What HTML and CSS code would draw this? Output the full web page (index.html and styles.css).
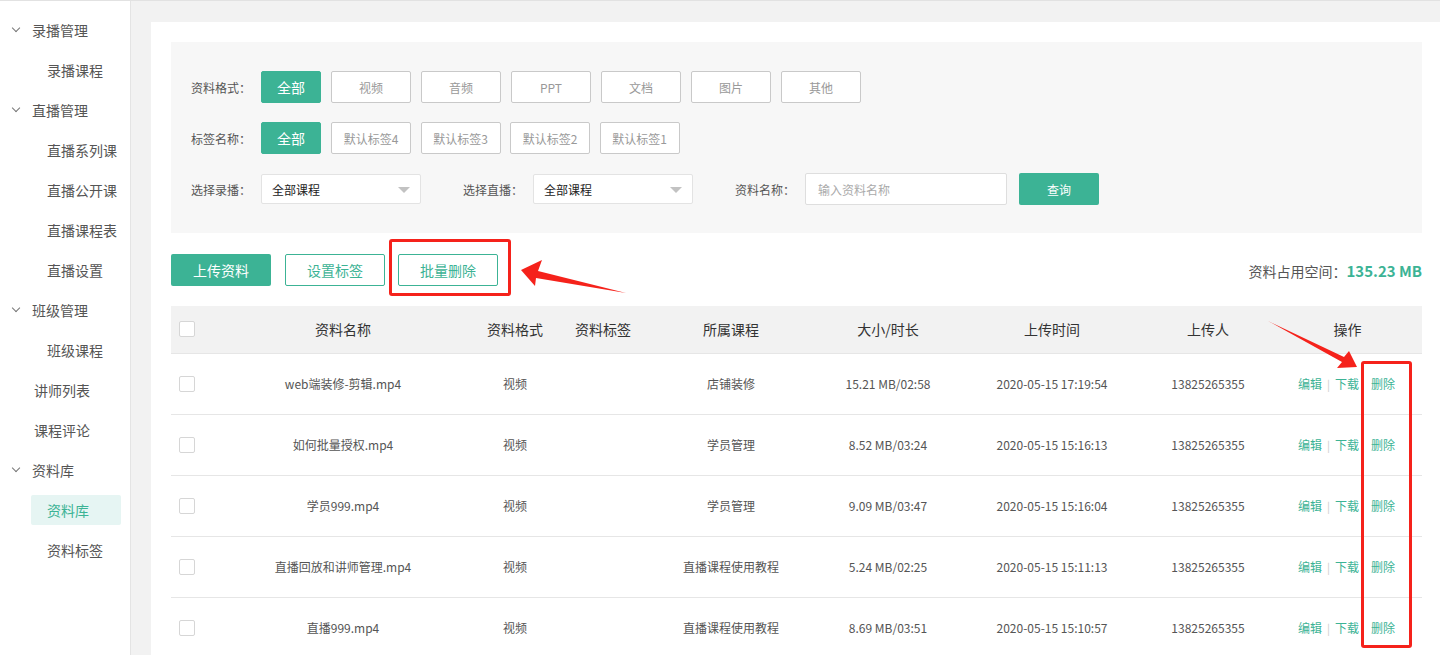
FILE: index.html
```html
<!DOCTYPE html>
<html lang="zh-CN">
<head>
<meta charset="utf-8">
<title>资料库</title>
<link rel="stylesheet" href="styles.css">
</head>
<body>
<div class="app">
  <aside class="sidebar">
    <div class="nav-group"><span class="chev"></span>录播管理</div>
    <div class="nav-sub">录播课程</div>
    <div class="nav-group"><span class="chev"></span>直播管理</div>
    <div class="nav-sub">直播系列课</div>
    <div class="nav-sub">直播公开课</div>
    <div class="nav-sub">直播课程表</div>
    <div class="nav-sub">直播设置</div>
    <div class="nav-group"><span class="chev"></span>班级管理</div>
    <div class="nav-sub">班级课程</div>
    <div class="nav-item">讲师列表</div>
    <div class="nav-item">课程评论</div>
    <div class="nav-group"><span class="chev"></span>资料库</div>
    <div class="nav-sub active"><span>资料库</span></div>
    <div class="nav-sub">资料标签</div>
  </aside>
  <main class="main">
    <div class="card">
      <section class="filters">
        <div class="frow">
          <span class="flabel">资料格式：</span>
          <div class="opts">
            <span class="opt on">全部</span><span class="opt">视频</span><span class="opt">音频</span><span class="opt">PPT</span><span class="opt">文档</span><span class="opt">图片</span><span class="opt">其他</span>
          </div>
        </div>
        <div class="frow">
          <span class="flabel">标签名称：</span>
          <div class="opts tags">
            <span class="opt on">全部</span><span class="opt">默认标签4</span><span class="opt">默认标签3</span><span class="opt">默认标签2</span><span class="opt">默认标签1</span>
          </div>
        </div>
        <div class="frow">
          <span class="flabel">选择录播：</span>
          <div class="select">全部课程<span class="caret"></span></div>
          <span class="flabel gap">选择直播：</span>
          <div class="select">全部课程<span class="caret"></span></div>
          <span class="flabel gap">资料名称：</span>
          <div class="input">输入资料名称</div>
          <span class="btn-query">查询</span>
        </div>
      </section>
      <section class="toolbar">
        <span class="btn solid">上传资料</span>
        <span class="btn outline">设置标签</span>
        <span class="btn outline batch">批量删除</span>
        <span class="usage">资料占用空间：<b>135.23 MB</b></span>
      </section>
      <table class="grid">
        <colgroup>
          <col class="c0"><col class="c1"><col class="c2"><col class="c3"><col class="c4"><col class="c5"><col class="c6"><col class="c7"><col class="c8">
        </colgroup>
        <thead>
          <tr><th><span class="cb"></span></th><th>资料名称</th><th>资料格式</th><th>资料标签</th><th>所属课程</th><th>大小/时长</th><th>上传时间</th><th>上传人</th><th>操作</th></tr>
        </thead>
        <tbody>
          <tr><td><span class="cb"></span></td><td>web端装修-剪辑.mp4</td><td>视频</td><td></td><td>店铺装修</td><td>15.21 MB/02:58</td><td>2020-05-15 17:19:54</td><td>13825265355</td><td class="ops"><a>编辑</a><i>|</i><a>下载</a><a class="del">删除</a></td></tr>
          <tr><td><span class="cb"></span></td><td>如何批量授权.mp4</td><td>视频</td><td></td><td>学员管理</td><td>8.52 MB/03:24</td><td>2020-05-15 15:16:13</td><td>13825265355</td><td class="ops"><a>编辑</a><i>|</i><a>下载</a><a class="del">删除</a></td></tr>
          <tr><td><span class="cb"></span></td><td>学员999.mp4</td><td>视频</td><td></td><td>学员管理</td><td>9.09 MB/03:47</td><td>2020-05-15 15:16:04</td><td>13825265355</td><td class="ops"><a>编辑</a><i>|</i><a>下载</a><a class="del">删除</a></td></tr>
          <tr><td><span class="cb"></span></td><td>直播回放和讲师管理.mp4</td><td>视频</td><td></td><td>直播课程使用教程</td><td>5.24 MB/02:25</td><td>2020-05-15 15:11:13</td><td>13825265355</td><td class="ops"><a>编辑</a><i>|</i><a>下载</a><a class="del">删除</a></td></tr>
          <tr><td><span class="cb"></span></td><td>直播999.mp4</td><td>视频</td><td></td><td>直播课程使用教程</td><td>8.69 MB/03:51</td><td>2020-05-15 15:10:57</td><td>13825265355</td><td class="ops"><a>编辑</a><i>|</i><a>下载</a><a class="del">删除</a></td></tr>
        </tbody>
      </table>
    </div>
  </main>
</div>
<div class="mark box1"></div>
<div class="mark box2"></div>
<svg class="arrows" width="1440" height="700" viewBox="0 0 1440 700">
  <polygon fill="#f5221b" points="521,269 542,259 538,270 626,292 536,277 535,285"/>
  <polygon fill="#f5221b" points="1357,366 1337,367 1342,361 1268,320 1344,356 1349,350"/>
</svg>
</body>
</html>
```

FILE: styles.css
```css
* { box-sizing: border-box; }
html, body { margin: 0; padding: 0; }
body {
  font-family: "Microsoft YaHei", "Noto Sans CJK SC", "Noto Sans", sans-serif;
  color: #333;
  background: #f2f2f2;
  position: relative;
  border-top: 1px solid #e2e2e2;
}
.app { display: flex; min-height: 700px; }
.sidebar {
  width: 131px;
  flex: none;
  background: #fff;
  border-right: 1px solid #e4e4e4;
  padding-top: 9px;
  font-size: 14px;
  color: #555;
}
.nav-group, .nav-sub, .nav-item {
  height: 40px;
  display: flex;
  align-items: center;
}
.nav-group { padding-left: 13px; }
.chev {
  width: 6px; height: 6px;
  border-right: 1px solid #777;
  border-bottom: 1px solid #777;
  transform: rotate(45deg);
  margin: -4px 13px 0 0;
}
.nav-sub { padding-left: 47px; }
.nav-item { padding-left: 34px; }
.nav-sub.active { padding-left: 31px; }
.nav-sub.active span {
  display: block;
  width: 90px;
  height: 30px;
  line-height: 30px;
  padding-left: 16px;
  background: #e6f5f3;
  color: #3cb395;
  border-radius: 2px;
}
.main { flex: 1; padding: 21px 0 0 20px; }
.card { background: #fff; padding: 20px 18px 20px 20px; min-height: 700px; }
.filters {
  background: #f7f7f7;
  padding: 29px 20px 28px 20px;
  display: flex;
  flex-direction: column;
  gap: 19px;
}
.frow { display: flex; align-items: center; height: 32px; }
.flabel { width: 70px; flex: none; font-size: 12px; color: #555; }
.flabel.gap { margin-left: 42px; }
.opts { display: flex; gap: 10px; }
.opts.tags { gap: 9.5px; }
.opt {
  width: 80px; height: 32px;
  border: 1px solid #c9c9c9;
  background: #fff;
  font-size: 12px;
  color: #999;
  display: flex; align-items: center; justify-content: center;
  border-radius: 2px;
}
.opt.on {
  width: 60px;
  background: #3cb395;
  border-color: #3cb395;
  color: #fff;
  font-size: 14px;
}
.tags .opt.on { margin-right: 0.5px; }
.select {
  width: 160px; height: 30px;
  background: #fff;
  border: 1px solid #e3e3e3;
  border-radius: 2px;
  font-size: 12px;
  color: #222;
  padding-left: 10px;
  display: flex; align-items: center;
  position: relative;
}
.caret {
  position: absolute;
  right: 10px; top: 12px;
  width: 0; height: 0;
  border-left: 6px solid transparent;
  border-right: 6px solid transparent;
  border-top: 6px solid #c2c2c2;
}
.input {
  width: 202px; height: 32px;
  background: #fff;
  border: 1px solid #dedede;
  border-radius: 2px;
  font-size: 12px;
  color: #aaa;
  padding-left: 12px;
  display: flex; align-items: center;
}
.btn-query {
  margin-left: 12px;
  width: 80px; height: 32px;
  background: #3cb395;
  color: #fff;
  font-size: 12px;
  border-radius: 2px;
  display: flex; align-items: center; justify-content: center;
}
.toolbar {
  display: flex; align-items: center;
  margin-top: 21px;
  height: 32px;
}
.btn {
  width: 100px; height: 32px;
  font-size: 14px;
  border-radius: 2px;
  display: flex; align-items: center; justify-content: center;
}
.btn.solid { background: #3cb395; color: #fff; }
.btn.outline { border: 1px solid #3cb395; color: #3cb395; background: #fff; margin-left: 14px; }
.btn.batch { margin-left: 13px; }
.usage { margin-left: auto; font-size: 14px; color: #555; }
.usage b { color: #3cb395; font-size: 15px; font-weight: bold; }
.grid {
  margin-top: 20px;
  width: 1251px;
  border-collapse: collapse;
  table-layout: fixed;
}
.c0 { width: 44px; } .c1 { width: 256px; } .c2 { width: 88px; } .c3 { width: 88px; }
.c4 { width: 168px; } .c5 { width: 146px; } .c6 { width: 182px; } .c7 { width: 130px; } .c8 { width: 149px; }
.grid th {
  height: 47px;
  background: #f2f2f2;
  font-size: 14px;
  font-weight: normal;
  color: #333;
  border-bottom: 1px solid #e6e6e6;
  text-align: center;
}
.grid td {
  height: 61px;
  font-size: 12px;
  color: #555;
  text-align: center;
  border-bottom: 1px solid #e6e6e6;
}
.grid th:first-child, .grid td:first-child { text-align: left; padding-left: 8px; }
.cb {
  display: block;
  width: 16px; height: 16px;
  border: 1px solid #d6d6d6;
  border-radius: 2px;
  background: #fff;
}
.ops { text-align: left !important; padding-left: 25px; white-space: nowrap; }
.ops a { color: #3cb395; }
.ops i { font-style: normal; color: #ccc; margin: 0 5px; font-size: 11px; }
.ops a.del { margin-left: 12px; }
.mark {
  position: absolute;
  border: 3px solid #f5221b;
  border-radius: 3px;
}
.box1 { left: 389px; top: 238px; width: 122px; height: 57px; }
.box2 { left: 1361px; top: 360px; width: 51px; height: 287px; }
.arrows { position: absolute; left: 0; top: 0; pointer-events: none; }
```
